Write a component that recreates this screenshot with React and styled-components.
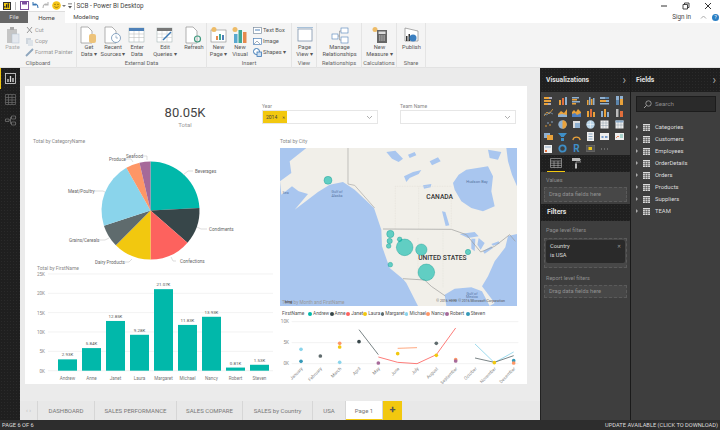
import styled, { createGlobalStyle } from "styled-components";

const GlobalStyle = createGlobalStyle`
  html, body { margin: 0; padding: 0; background: #fff; }
  body { width: 720px; height: 430px; overflow: hidden; font-family: Roboto, "Liberation Sans", sans-serif; }
  * { box-sizing: border-box; }
`;

const dots = `radial-gradient(rgba(255,255,255,.05) .5px, transparent .6px)`;

const Ico = ({ w = 18, h = 18, children }) => (
  <svg width={w} height={h} viewBox={`0 0 ${w} ${h}`} fill="none">{children}</svg>
);

const Doc = ({ x = 2, y = 1 }) => (
  <path d={`M${x} ${y}h7l4 4v12h-11z`} fill="#fff" stroke="#8f8f8f" strokeWidth=".7" />
);

const TableGlyph = ({ size = 7, color = "#ddd" }) => (
  <svg width={size} height={size} viewBox="0 0 7 7">
    <rect width="7" height="7" fill={color} />
    <path d="M2.3 1.5v5.5M4.7 1.5v5.5M0 1.5h7M0 3.4h7M0 5.3h7" stroke="#333" strokeWidth=".5" />
  </svg>
);

const icons = {
  paste: (
    <Ico>
      <rect x="3" y="3" width="10" height="14" fill="#c5c5c5" />
      <rect x="6" y="1" width="4" height="3" fill="#aaa" />
      <rect x="8" y="8" width="7" height="9" fill="#e4e8ee" stroke="#b4c2d2" strokeWidth=".5" />
    </Ico>
  ),
  getData: (
    <Ico>
      <Doc x={1} />
      <rect x="9" y="8" width="7" height="9" rx="2" fill="#edc37a" />
    </Ico>
  ),
  recent: (
    <Ico>
      <Doc x={1} />
      <circle cx="12" cy="12" r="4.5" fill="#fff" stroke="#6c8fb4" strokeWidth=".8" />
      <path d="M12 9.5V12h2" stroke="#6c8fb4" strokeWidth=".6" />
    </Ico>
  ),
  enter: (
    <Ico>
      <rect x="1" y="2" width="15" height="14" fill="#fff" stroke="#9aa" strokeWidth=".5" />
      <rect x="1" y="2" width="15" height="3" fill="#4f81b8" />
      <path d="M1 8h15M1 11.5h15M6 5v11M11 5v11" stroke="#b5b5b5" strokeWidth=".5" />
    </Ico>
  ),
  edit: (
    <Ico>
      <rect x="1" y="2" width="15" height="14" fill="#fff" stroke="#9aa" strokeWidth=".5" />
      <rect x="1" y="2" width="15" height="3" fill="#777" />
      <path d="M1 8h15M1 11.5h15M6 5v11M11 5v11" stroke="#c5c5c5" strokeWidth=".5" />
      <path d="M7 14 15 6" stroke="#3b78b5" strokeWidth="1.5" />
    </Ico>
  ),
  refresh: (
    <Ico>
      <Doc x={1} />
      <circle cx="12.5" cy="13" r="3" stroke="#3f9a7f" strokeWidth="1.2" />
    </Ico>
  ),
  newPage: (
    <Ico>
      <rect x="1" y="4" width="15" height="12" fill="#fff" stroke="#888" strokeWidth=".6" />
      <circle cx="4" cy="3.5" r="2.5" fill="#eebc68" />
      <rect x="6" y="10" width="2" height="4" fill="#e58a4e" />
      <rect x="9" y="8" width="2" height="6" fill="#3fa796" />
      <rect x="12" y="9" width="2" height="5" fill="#4f81b8" />
    </Ico>
  ),
  newVisual: (
    <Ico>
      <circle cx="4" cy="3.5" r="2.5" fill="#eebc68" />
      <rect x="3" y="8" width="3.5" height="9" fill="#58a8d0" />
      <rect x="7.5" y="4" width="3.5" height="13" fill="#3fa796" />
      <rect x="12" y="6" width="3.5" height="11" fill="#e58a4e" />
    </Ico>
  ),
  pageView: (
    <Ico>
      <rect x="2" y="3" width="14" height="12" fill="#fff" stroke="#7f95ad" strokeWidth=".8" />
      <path d="M1 1.5h16" stroke="#86aacd" strokeWidth=".7" />
    </Ico>
  ),
  manage: (
    <Ico>
      <rect x="1" y="8" width="6" height="5" fill="#fff" stroke="#4f81b8" strokeWidth=".6" />
      <rect x="10" y="2" width="7" height="5" fill="#fff" stroke="#4f81b8" strokeWidth=".6" />
      <rect x="10" y="11" width="7" height="6" fill="#fff" stroke="#4f81b8" strokeWidth=".6" />
      <path d="M7 10h1.5V5H10M8.5 10v4H10" stroke="#777" strokeWidth=".5" />
    </Ico>
  ),
  measure: (
    <Ico>
      <circle cx="4" cy="3.5" r="2.5" fill="#eebc68" />
      <rect x="6" y="4" width="10" height="13" fill="#666" />
      <rect x="7.5" y="5.5" width="7" height="2.5" fill="#ddd" />
      <path d="M8 10h6M8 12h6M8 14h6" stroke="#ddd" strokeWidth=".9" strokeDasharray="1.5 .7" />
    </Ico>
  ),
  publish: (
    <Ico>
      <path d="M2 2 15 5v10H2z" fill="#fff" stroke="#777" strokeWidth=".6" />
      <rect x="3" y="10" width="1.5" height="5" fill="#333" />
      <rect x="5.5" y="8" width="1.5" height="7" fill="#333" />
      <circle cx="10" cy="12" r="3.5" fill="#3b7fc0" />
    </Ico>
  ),
};

function Small({ children }) {
  return <svg width="9" height="9" viewBox="0 0 9 9" fill="none">{children}</svg>;
}

const tileIcons = [
  <><rect y="1" width="5" height="2" fill="#e9a23b" /><rect x="5" y="1" width="3" height="2" fill="#aab" /><rect y="4" width="7" height="2" fill="#e9a23b" /><rect y="7" width="4" height="2" fill="#e9a23b" /><rect x="4" y="7" width="3" height="2" fill="#aab" /></>,
  <><rect x="1" y="4" width="2" height="5" fill="#e9a23b" /><rect x="4" y="2" width="2" height="7" fill="#e36f3c" /><rect x="7" y="1" width="2" height="8" fill="#8fb0d0" /></>,
  <><rect y="1" width="7" height="1.5" fill="#8fb0d0" /><rect y="3" width="5" height="1.5" fill="#e9a23b" /><rect y="5" width="8" height="1.5" fill="#8fb0d0" /><rect y="7" width="4" height="1.5" fill="#e9a23b" /></>,
  <><rect x="1" y="4" width="1.5" height="5" fill="#e9a23b" /><rect x="3" y="1" width="1.5" height="8" fill="#8fb0d0" /><rect x="5" y="3" width="1.5" height="6" fill="#e9a23b" /><rect x="7" y="2" width="1.5" height="7" fill="#8fb0d0" /></>,
  <><rect y="1" width="5" height="2" fill="#8fb0d0" /><rect x="5" y="1" width="4" height="2" fill="#5c86ad" /><rect y="4" width="6" height="2" fill="#e9a23b" /><rect x="6" y="4" width="3" height="2" fill="#8fb0d0" /><rect y="7" width="9" height="1.5" fill="#8fb0d0" /></>,
  <><rect x="1" width="3" height="9" fill="#8fb0d0" /><rect x="1" y="4" width="3" height="5" fill="#5c86ad" /><rect x="5" width="3" height="9" fill="#8fb0d0" /><rect x="5" y="3" width="3" height="6" fill="#e9a23b" /></>,
  <><path d="M0 8 3 4l2 2 4-5" stroke="#e9a23b" strokeWidth=".8" /><path d="M0 6l3 1 2-3 4 2" stroke="#8fb0d0" strokeWidth=".6" /></>,
  <><path d="M0 9V6l3-3 3 2 3-4v8z" fill="#e9a23b" /><path d="M0 9V7l4-1 5 1v2z" fill="#8fb0d0" /></>,
  <><path d="M0 9V4l2-2 2 2 2-3 3 3v5z" fill="#e9a23b" /><path d="M0 9V6l3-1 2 2 4-2v4z" fill="#4f7fc0" /></>,
  <><rect x="1" y="3" width="2" height="6" fill="#e9a23b" /><rect x="4" y="1" width="2" height="8" fill="#e36f3c" /><rect x="7" y="4" width="2" height="5" fill="#e9a23b" /></>,
  <><rect x="1" y="3" width="2" height="6" fill="#8fb0d0" /><rect x="4" y="1" width="2" height="8" fill="#e9a23b" /><rect x="7" y="4" width="2" height="5" fill="#8fb0d0" /></>,
  <><rect x="1" y="1" width="2.5" height="8" fill="#bbb" /><rect x="5" y="3" width="3" height="6" fill="#e36f3c" /></>,
  <><circle cx="2" cy="6" r=".8" fill="#e9a23b" /><circle cx="4" cy="3" r=".8" fill="#8fb0d0" /><circle cx="6" cy="5" r=".8" fill="#e9a23b" /><circle cx="8" cy="2" r=".8" fill="#8fb0d0" /></>,
  <><circle cx="4.5" cy="4.5" r="4.2" fill="#8fb0d0" /><path d="M4.5 4.5V.3a4.2 4.2 0 0 1 0 8.4z" fill="#e9a23b" /></>,
  <><rect x="1" y="1" width="7" height="7" fill="#ddd" /><rect x="3" y="3" width="5" height="5" fill="#8fb0d0" /></>,
  <><circle cx="4.5" cy="4.5" r="4.2" fill="#bcd6e8" /><path d="M1 4.5h7M4.5 1v7" stroke="#fff" strokeWidth=".5" /></>,
  <><rect x=".5" y=".5" width="8" height="8" fill="#eee" /><path d="M.5 3h8M.5 5.5h8M3 .5v8M6 .5v8" stroke="#789" strokeWidth=".4" /></>,
  <><rect x=".5" y=".5" width="8" height="8" fill="#eee" /><rect x=".5" y=".5" width="8" height="2" fill="#8fb0d0" /><path d="M.5 5h8M3 .5v8M6 .5v8" stroke="#789" strokeWidth=".4" /></>,
  <><rect y="1" width="6" height="5" fill="#8fb0d0" /><rect x="3" y="3" width="6" height="5" fill="#e9a23b" /></>,
  <><path d="M0 1h9L6 4.5V5H3v-.5z" fill="#3f8fc7" /><rect x="3" y="6" width="3" height="3" fill="#3f8fc7" /></>,
  <><path d="M.8 8a3.8 3.8 0 0 1 7.4 0" stroke="#e9a23b" strokeWidth="1.3" /></>,
  <><rect x="1" y="0" width="7" height="9" fill="#eee" /><path d="M2.5 2h4M2.5 4.5h4M2.5 7h4" stroke="#5c86ad" strokeWidth=".7" /></>,
  <><rect y="1" width="9" height="7" fill="#eee" /><path d="M1.5 5h2M5 5h2.5" stroke="#4f7fc0" strokeWidth="1.5" /></>,
  <><rect y="1" width="9" height="7" fill="#eee" /><path d="M1 6l2-2 1 1" stroke="#e36f3c" strokeWidth=".8" /><path d="M5 3h3M5 5h3" stroke="#3fa796" strokeWidth=".8" /></>,
  <><rect y="1" width="8" height="8" fill="#eee" /><path d="M1 6h2v2H1z" fill="#e36f3c" /><path d="M1 3h6" stroke="#8fb0d0" /></>,
  <><circle cx="4.5" cy="4.5" r="3.2" stroke="#3f8fc7" strokeWidth="1.8" /></>,
  null,
  <><rect x="0" y="1.5" width="9" height="6" fill="#555" stroke="#888" strokeWidth=".4" /><rect x="2.5" y="3" width="3.5" height="3" fill="#e9c21b" /></>,
  <><path d="M1 5h.9M4 5h.9M7 5h.9" stroke="#bbb" strokeWidth=".8" /></>,
];

const tabs = ["DASHBOARD", "SALES PERFORMANCE", "SALES COMPARE", "SALES by Country", "USA"];
const tabWidths = [57, 82, 66, 70, 33];
const fields = ["Categories", "Customers", "Employees", "OrderDetails", "Orders", "Products", "Suppliers", "TEAM"];

const pieCx = 150.5;
const pieCy = 210.5;
const pieR = 49;
const slices = [
  ["#01b8aa", 0, 87],
  ["#374649", 87, 131],
  ["#fd625e", 131, 180],
  ["#f2c80f", 180, 225],
  ["#5f6b6d", 225, 252],
  ["#8ad4eb", 252, 330.5],
  ["#fe9666", 330.5, 347],
  ["#a66999", 347, 360],
];
const pieLabels = [
  ["Seafood", 126, 158, "M143 156h4v4"],
  ["Produce", 109, 161, "M126 159h5l2 3"],
  ["Meat/Poultry", 68, 193, "M95 191h8l2 1"],
  ["Grains/Cereals", 69, 242, "M99 240h6l4-2"],
  ["Dairy Products", 95, 264, "M125 262h4l3-3"],
  ["Confections", 180, 263, "M176 261h-3l-2-4"],
  ["Condiments", 209, 231, "M207 229h-6l-4-2"],
  ["Beverages", 195, 173, "M193 171h-5l-5 4"],
];

function arc(start, end) {
  const p = (deg) => {
    const a = ((deg - 90) * Math.PI) / 180;
    return `${(pieCx + pieR * Math.cos(a)).toFixed(2)} ${(pieCy + pieR * Math.sin(a)).toFixed(2)}`;
  };
  return `M${pieCx} ${pieCy}L${p(start)}A${pieR} ${pieR} 0 ${end - start > 180 ? 1 : 0} 1 ${p(end)}Z`;
}

const bars = [
  ["Andrew", 2.93, "2.93K"],
  ["Anne", 5.84, "5.84K"],
  ["Janet", 12.85, "12.85K"],
  ["Laura", 9.28, "9.28K"],
  ["Margaret", 21.07, "21.07K"],
  ["Michael", 11.83, "11.83K"],
  ["Nancy", 13.93, "13.93K"],
  ["Robert", 0.81, "0.81K"],
  ["Steven", 1.53, "1.53K"],
];
const barBase = 370.7;
const perK = 3.87;

const legend = [
  ["Andrew", "#01b8aa", 21.6],
  ["Anne", "#374649", 16.7],
  ["Janet", "#fd625e", 17],
  ["Laura", "#f2c80f", 17.3],
  ["Margaret", "#5f6b6d", 24],
  ["Michael", "#8ad4eb", 21.7],
  ["Nancy", "#fe9666", 18.7],
  ["Robert", "#a66999", 20.7],
  ["Steven", "#3599b8", 20],
];
const months = ["January", "February", "March", "April", "May", "June", "July", "August", "September", "October", "November", "December"];
const points = [
  [78, 134, "#8ad4eb"], [78, 170, "#3599b8"], [136, 154, "#5f6b6d"], [194, 116, "#fe9666"], [194, 127, "#f2c80f"],
  [194, 173, "#8ad4eb"], [252, 111, "#374649"], [310, 175, "#a66999"], [368, 147, "#f2c80f"], [484, 116, "#5f6b6d"],
  [484, 152, "#f2c80f"], [542, 165, "#fe9666"], [542, 169, "#a66999"], [658, 174, "#f2c80f"], [716, 168, "#3599b8"], [716, 175, "#fe9666"],
];
const lines = [
  ["#5f6b6d", "252,75 310,150"],
  ["#fd625e", "310,157 368,173 426,177 484,150 542,70"],
  ["#fe9666", "368,131 426,129"],
  ["#8ad4eb", "600,118 658,174 716,142"],
  ["#5f6b6d", "600,160 658,173 716,153"],
];
const bubbles = [
  [160, 257, 12], [347, 418, 11], [345, 439, 8], [342, 454, 7], [375, 434, 7],
  [390, 458, 25], [440, 465, 17], [455, 533, 25], [347, 510, 7], [580, 472, 8],
];

function Pie() {
  return (
    <ChartSvg width="255" height="116" viewBox="25 148 255 116">
      {slices.map(([c, a, b]) => <path key={c} d={arc(a, b)} fill={c} />)}
      {pieLabels.map(([t, x, y, d]) => (
        <g key={t}>
          <path d={d} stroke="#bbb" strokeWidth=".5" fill="none" />
          <text x={x} y={y} fontSize="4.6" fill="#666">{t}</text>
        </g>
      ))}
    </ChartSvg>
  );
}

function BarChart() {
  return (
    <ChartSvg width="255" height="112" viewBox="25 272 255 112">
      {[0, 5, 10, 15, 20, 25].map((k) => (
        <g key={k}>
          <path d={`M48 ${barBase - k * perK}H273`} stroke="#eaeaea" strokeWidth=".6" />
          <text x="45" y={barBase - k * perK + 2} fontSize="4.6" fill="#888" textAnchor="end">{k}K</text>
        </g>
      ))}
      {bars.map(([name, v, label], i) => {
        const x = 58 + i * 24;
        const h = v * perK;
        return (
          <g key={name}>
            <rect x={x} y={barBase - h} width="19" height={h} fill="#01b8aa" />
            <text x={x + 9.5} y={barBase - h - 3} fontSize="4.4" fill="#555" textAnchor="middle">{label}</text>
            <text x={x + 9.5} y="380" fontSize="4.6" fill="#777" textAnchor="middle">{name}</text>
          </g>
        );
      })}
    </ChartSvg>
  );
}

function MapChart() {
  const water = "#a9c6ef";
  return (
    <ChartSvg width="237" height="158" viewBox="16 160 711 474">
      <rect x="16" y="160" width="711" height="474" fill={water} />
      <path
        d="M95 160H727V418L700 424 692 458 660 500 640 545 622 575 660 625 645 634 622 590 590 578 540 582 510 600 515 634H430L395 565 385 553 345 520 322 455 320 405 298 340 240 285 205 262 165 270 130 292 60 345 100 298 72 290 52 275 20 300 16 260 50 235 45 200Z"
        fill="#f1efe9"
      />
      <path d="M575 225 640 215 655 245 650 290 660 335 625 350 590 340 560 320 540 285 535 265 552 240Z" fill={water} />
      <path d="M695 160H727V275L712 240 700 200ZM640 165 680 172 670 195 645 190Z" fill={water} />
      <path d="M335 172 362 168 385 192 372 202 352 192ZM388 245 415 232 440 226 432 238 405 250 395 262ZM445 272 470 268 468 278 448 282ZM502 350 512 352 524 392 513 394ZM465 200 490 188 498 200 472 212ZM400 180 420 172 425 182 405 190Z" fill={water} />
      <path d="M555 418 600 412 612 425 580 430ZM590 432 602 432 600 470 590 462ZM612 430 630 445 618 465 608 450ZM625 470 650 455 655 460 630 477ZM650 448 672 440 675 447 655 453Z" fill={water} />
      <path d="M362 275V402M432 275V402M362 275H530M530 310V400M430 430V555M505 410V580" stroke="#dedbd4" strokeWidth="1.2" strokeDasharray="3 2" fill="none" />
      <path d="M220 160V268L240 272 300 340" stroke="#a9a8a4" strokeWidth="2" fill="none" />
      <path d="M325 403 530 404 575 420 618 472 660 455 705 420 722 440" stroke="#9a9a98" strokeWidth="2" fill="none" />
      <path d="M385 552 450 556 470 575 512 604" stroke="#9a9a98" strokeWidth="2" fill="none" />
      {bubbles.map(([x, y, r]) => (
        <circle key={`${x}-${y}`} cx={x} cy={y} r={r} fill="#01b8aa" fillOpacity=".6" stroke="#018f85" strokeWidth="1" />
      ))}
      <text x="495" y="312" fontSize="20" fill="#333" textAnchor="middle" fontWeight="500">CANADA</text>
      <text x="503" y="497" fontSize="20" fill="#333" textAnchor="middle" fontWeight="500">UNITED STATES</text>
      <text x="607" y="264" fontSize="12" fill="#55749f" textAnchor="middle">Hudson Bay</text>
      <text x="187" y="296" fontSize="11" fill="#55749f" textAnchor="middle">Gulf of</text>
      <text x="187" y="308" fontSize="11" fill="#55749f" textAnchor="middle">Alaska</text>
      <text x="33" y="299" fontSize="11" fill="#55749f" textAnchor="middle">Sea</text>
      <text x="592" y="600" fontSize="11" fill="#55749f" textAnchor="middle">Gulf of</text>
      <text x="592" y="611" fontSize="11" fill="#55749f" textAnchor="middle">Mexico</text>
      <text x="22" y="629" fontSize="14" fill="#999">Total by Month and FirstName</text>
      <text x="30" y="624" fontSize="12" fill="#333">bing</text>
      <text x="485" y="623" fontSize="10.5" fill="#555">© 2016 HERE   © 2016 Microsoft Corporation</text>
    </ChartSvg>
  );
}

function LineChart() {
  return (
    <ChartSvg width="245" height="66" viewBox="15 40 735 198">
      {[[51, "10K"], [114, "5K"], [177, "0K"]].map(([y, t]) => (
        <g key={t}>
          <path d={`M50 ${y}H730`} stroke="#e4e4e4" strokeWidth="1.5" />
          <text x="42" y={y + 5} fontSize="14" fill="#888" textAnchor="end">{t}</text>
        </g>
      ))}
      {lines.map(([c, p]) => <polyline key={p} points={p} fill="none" stroke={c} strokeWidth="2.5" />)}
      {points.map(([x, y, c]) => <circle key={`${x}-${y}`} cx={x} cy={y} r="5.5" fill={c} />)}
      {months.map((m, i) => (
        <text key={m} x={84 + i * 58} y="193" fontSize="13.5" fill="#888" textAnchor="end" transform={`rotate(-45 ${84 + i * 58} 193)`}>{m}</text>
      ))}
    </ChartSvg>
  );
}

export default function App() {
  return (
    <>
      <GlobalStyle />
      <Window>
        <TitleBar>
          <AppLogo><svg width="7" height="7" viewBox="0 0 7 7"><path d="M1 6V4M3 6V2M5 6V1" stroke="#222" strokeWidth="1.3" /></svg></AppLogo>
          <TitleSep />
          <QuickIcons>
            <svg width="9" height="9" viewBox="0 0 9 9"><rect x=".5" y=".5" width="8" height="8" fill="#fff" stroke="#7a4f9e" /><rect x="2" y=".5" width="5" height="3" fill="#7a4f9e" /></svg>
            <svg width="9" height="9" viewBox="0 0 9 9" fill="none"><path d="M2 1v3h3M2 4c2-2 5-1 5 3" stroke="#3b78b5" strokeWidth="1.1" /></svg>
            <svg width="9" height="9" viewBox="0 0 9 9" fill="none"><path d="M7 1v3H4M7 4C5 2 2 3 2 7" stroke="#b5b5b5" strokeWidth="1.1" /></svg>
            <svg width="9" height="9" viewBox="0 0 9 9"><circle cx="4.5" cy="4.5" r="4.3" fill="#f5c518" /><path d="M2.5 5.5c1 1.2 3 1.2 4 0" stroke="#6b4e00" strokeWidth=".6" fill="none" /><circle cx="3" cy="3.3" r=".6" fill="#6b4e00" /><circle cx="6" cy="3.3" r=".6" fill="#6b4e00" /></svg>
            <svg width="4" height="9" viewBox="0 0 4 9"><path d="M0 4h4L2 6z" fill="#777" /></svg>
            <svg width="4" height="9" viewBox="0 0 4 9"><path d="M0 2.5h4v.7H0zM0 5h4L2 7.500z" fill="#555" /></svg>
          </QuickIcons>
          <TitleSep $tight />
          <TitleText>SCB - Power BI Desktop</TitleText>
          <WindowControls>
            <svg width="8" height="8" viewBox="0 0 8 8"><path d="M1 4h6" stroke="#333" /></svg>
            <svg width="8" height="8" viewBox="0 0 8 8" fill="none"><path d="M1 2.5h4.5V7H1zM2.5 2.5V1H7v4.5H5.5" stroke="#333" strokeWidth=".9" /></svg>
            <svg width="8" height="8" viewBox="0 0 8 8"><path d="M1 1l6 6M7 1 1 7" stroke="#333" /></svg>
          </WindowControls>
        </TitleBar>
        <TabBar>
          <FileTab>File</FileTab>
          <RibbonTab $active>Home</RibbonTab>
          <RibbonTab>Modeling</RibbonTab>
          <SignIn>Sign in</SignIn>
          <svg width="7" height="7" viewBox="0 0 7 7" fill="none"><path d="M1 4.5 3.5 2 6 4.5" stroke="#aaa" /></svg>
          <HelpDot>?</HelpDot>
        </TabBar>
        <Ribbon>
          <Group $w={77} label="Clipboard">
            <BigButton $w={25} $dim icon={icons.paste} lines={["Paste"]} />
            <SmallList $left={0}>
              <SmallItem $dim><Small><path d="M2 1l5 6M7 1 2 7" stroke="#9a9a9a" /></Small>Cut</SmallItem>
              <SmallItem $dim><Small><rect x="1" y="1" width="5" height="6" fill="#cfd6dd" /><rect x="3" y="3" width="5" height="6" fill="#dde3e9" /></Small>Copy</SmallItem>
              <SmallItem $dim><Small><path d="M1 8 5 4l3-3" stroke="#8ea6bd" strokeWidth="1.8" /></Small>Format Painter</SmallItem>
            </SmallList>
          </Group>
          <Group $w={130} label="External Data">
            <BigButton $w={24} icon={icons.getData} lines={["Get", "Data ▾"]} />
            <BigButton $w={24} icon={icons.recent} lines={["Recent", "Sources ▾"]} />
            <BigButton $w={24} icon={icons.enter} lines={["Enter", "Data"]} />
            <BigButton $w={32} icon={icons.edit} lines={["Edit", "Queries ▾"]} />
            <BigButton $w={26} icon={icons.refresh} lines={["Refresh"]} />
          </Group>
          <Group $w={85} label="Insert">
            <BigButton $w={23} icon={icons.newPage} lines={["New", "Page ▾"]} />
            <BigButton $w={20} icon={icons.newVisual} lines={["New", "Visual"]} />
            <SmallList $left={3}>
              <SmallItem><Small><rect x=".5" y="1.5" width="8" height="6" fill="#fff" stroke="#7d8ea0" strokeWidth=".7" /><path d="M2 4h5" stroke="#4f81b8" /></Small>Text Box</SmallItem>
              <SmallItem><Small><rect x=".5" y="1.5" width="8" height="6" fill="#fff" stroke="#4f81b8" strokeWidth=".7" /><path d="M1 7l3-3 3 3" stroke="#7d8ea0" strokeWidth=".7" fill="none" /></Small>Image</SmallItem>
              <SmallItem><Small><circle cx="3.5" cy="3.5" r="3" fill="#fff" stroke="#3b78b5" /><rect x="4" y="4" width="4.5" height="4.5" fill="#cfe0f2" stroke="#3b78b5" strokeWidth=".8" /></Small>Shapes ▾</SmallItem>
            </SmallList>
          </Group>
          <Group $w={25} label="View">
            <BigButton $w={25} icon={icons.pageView} lines={["Page", "View ▾"]} />
          </Group>
          <Group $w={45} label="Relationships">
            <BigButton $w={45} icon={icons.manage} lines={["Manage", "Relationships"]} />
          </Group>
          <Group $w={35} label="Calculations">
            <BigButton $w={35} icon={icons.measure} lines={["New", "Measure ▾"]} />
          </Group>
          <Group $w={29} label="Share">
            <BigButton $w={29} icon={icons.publish} lines={["Publish"]} />
          </Group>
        </Ribbon>
        <Main>
          <Rail>
            <RailItem $active>
              <svg width="11" height="11" viewBox="0 0 11 11" fill="none"><rect x=".5" y=".5" width="10" height="10" stroke="#ddd" strokeWidth=".8" /><path d="M3 9V6M5.5 9V3M8 9V5" stroke="#ddd" strokeWidth="1.3" /></svg>
            </RailItem>
            <RailItem>
              <svg width="11" height="11" viewBox="0 0 11 11" fill="none"><path d="M.5.5h10v10H.5zM.5 3.5h10M.5 6h10M.5 8.5h10M3.5.5v10M7 .5v10" stroke="#6d6d6d" strokeWidth=".7" /></svg>
            </RailItem>
            <RailItem>
              <svg width="11" height="11" viewBox="0 0 11 11" fill="none"><path d="M.5 4H4v2.5H.5zM6.5 1h4v3h-4zM6.5 7h4v3h-4zM4 5h1.5V2.500h1M5.500 5v3.500h1" stroke="#7a7a7a" strokeWidth=".7" /></svg>
            </RailItem>
          </Rail>
          <Canvas>
            <Stage>
              <Page>
                <Column>
                  <Kpi>
                    <KpiValue>80.05K</KpiValue>
                    <KpiLabel>Total</KpiLabel>
                  </Kpi>
                  <VisualTitle $left={8} $h={11}>Total by CategoryName</VisualTitle>
                  <Pie />
                  <VisualTitle $left={12} $h={8}>Total by FirstName</VisualTitle>
                  <BarChart />
                </Column>
                <Column>
                  <SlicerRow>
                    <Slicer>
                      <SlicerLabel>Year</SlicerLabel>
                      <SlicerBox>
                        <Chip>2014 <span>✕</span></Chip>
                        <Chevron />
                      </SlicerBox>
                    </Slicer>
                    <Slicer>
                      <SlicerLabel>Team Name</SlicerLabel>
                      <SlicerBox>
                        <Chevron />
                      </SlicerBox>
                    </Slicer>
                  </SlicerRow>
                  <VisualTitle $left={0} $h={11}>Total by City</VisualTitle>
                  <MapChart />
                  <Legend>
                    <LegendTitle>FirstName</LegendTitle>
                    {legend.map(([n, c, w]) => (
                      <LegendItem key={n} $w={w}><LegendDot $color={c} />{n}</LegendItem>
                    ))}
                  </Legend>
                  <LineChart />
                </Column>
              </Page>
            </Stage>
            <PageTabs>
              <TabArrows>‹ ›</TabArrows>
              {tabs.map((t, i) => <PageTab key={t} $w={tabWidths[i]}>{t}</PageTab>)}
              <PageTab $w={37} $active>Page 1</PageTab>
              <AddTab>+</AddTab>
            </PageTabs>
          </Canvas>
          <VizPane>
            <PaneHeader>Visualizations<PaneChevron>›</PaneChevron></PaneHeader>
            <TileGrid>
              {tileIcons.map((t, i) => (
                <Tile key={i}>
                  {i === 26 ? <RTile>R</RTile> : <svg width="9" height="9" viewBox="0 0 9 9" fill="none">{t}</svg>}
                </Tile>
              ))}
            </TileGrid>
            <BuildTabs>
              <BuildTab $active>
                <svg width="12" height="10" viewBox="0 0 12 10" fill="none"><path d="M.5.5h11v9H.5zM.5 3h11M.5 5.2h11M.5 7.4h11M4 3v6.5M8 3v6.5" stroke="#bbb" strokeWidth=".6" /></svg>
              </BuildTab>
              <BuildTab>
                <svg width="10" height="11" viewBox="0 0 10 11"><rect x="1" y="0" width="8" height="3" fill="#bbb" /><path d="M9 1.5h1V4H5v1.5" stroke="#bbb" strokeWidth=".6" fill="none" /><rect x="4" y="5.5" width="2" height="5" fill="#bbb" /></svg>
              </BuildTab>
            </BuildTabs>
            <WellLabel>Values</WellLabel>
            <DropWell $h={15}>Drag data fields here</DropWell>
            <FiltersHeader>Filters</FiltersHeader>
            <WellLabel $gap={5}>Page level filters</WellLabel>
            <FilterWell>
              <FilterCard>
                <div>Country<br />is USA</div>
                <CardClose>✕</CardClose>
              </FilterCard>
            </FilterWell>
            <WellLabel $gap={6}>Report level filters</WellLabel>
            <DropWell $h={13}>Drag data fields here</DropWell>
          </VizPane>
          <FieldsPane>
            <PaneHeader>Fields<PaneChevron>›</PaneChevron></PaneHeader>
            <SearchBox>
              <svg width="9" height="9" viewBox="0 0 9 9" fill="none"><circle cx="5.5" cy="3.5" r="2.7" stroke="#aaa" strokeWidth=".8" /><path d="M3.5 5.5 1 8" stroke="#aaa" strokeWidth=".9" /></svg>
              Search
            </SearchBox>
            <FieldList>
              {fields.map((f) => (
                <FieldRow key={f}>
                  <FieldCaret />
                  <TableGlyph />
                  {f}
                </FieldRow>
              ))}
            </FieldList>
          </FieldsPane>
        </Main>
        <StatusBar>
          <span>PAGE 6 OF 6</span>
          <span>UPDATE AVAILABLE (CLICK TO DOWNLOAD)</span>
        </StatusBar>
      </Window>
    </>
  );
}

function Group({ $w, label, children }) {
  return (
    <GroupBox $w={$w}>
      <GroupBody>{children}</GroupBody>
      <GroupLabel>{label}</GroupLabel>
    </GroupBox>
  );
}

function BigButton({ $w, $dim, icon, lines: labelLines }) {
  return (
    <BigBtn $w={$w} $dim={$dim}>
      <BigIcon>{icon}</BigIcon>
      {labelLines.map((l) => <span key={l}>{l}</span>)}
    </BigBtn>
  );
}

function Chevron() {
  return (
    <ChevronWrap>
      <svg width="7" height="5" viewBox="0 0 7 5" fill="none"><path d="M1 1l2.5 2.500L6 1" stroke="#999" strokeWidth=".8" /></svg>
    </ChevronWrap>
  );
}

const Window = styled.div`
  width: 720px;
  height: 430px;
  display: flex;
  flex-direction: column;
  overflow: hidden;
`;

const TitleBar = styled.div`
  height: 11px;
  display: flex;
  align-items: center;
  padding-left: 3px;
  background: #fff;
`;

const AppLogo = styled.div`
  width: 8px;
  height: 8px;
  background: #f2c80f;
  border: 1px solid #333;
  display: flex;
  align-items: center;
  justify-content: center;
  overflow: hidden;
`;

const TitleSep = styled.div`
  width: 1px;
  height: 8px;
  background: #bbb;
  margin: 0 ${(p) => (p.$tight ? 2 : 4)}px;
`;

const QuickIcons = styled.div`
  display: flex;
  align-items: center;
  gap: 1.5px;
`;

const TitleText = styled.div`
  font-size: 6.4px;
  color: #444;
`;

const WindowControls = styled.div`
  margin-left: auto;
  display: flex;
  gap: 14px;
  padding-right: 8px;
`;

const TabBar = styled.div`
  height: 12px;
  display: flex;
  align-items: center;
  background: #fff;
`;

const FileTab = styled.div`
  width: 28px;
  height: 12px;
  background: #666;
  color: #ddd;
  font-size: 6.2px;
  line-height: 12px;
  text-align: center;
`;

const RibbonTab = styled.div`
  height: 12px;
  width: ${(p) => (p.$active ? 37 : 42)}px;
  background: ${(p) => (p.$active ? "#f4f4f4" : "#fff")};
  border-top: ${(p) => (p.$active ? "1px solid #ddd" : "0")};
  color: #444;
  font-size: 6.2px;
  line-height: 12px;
  text-align: center;
`;

const SignIn = styled.div`
  margin-left: auto;
  margin-right: 9px;
  font-size: 6.3px;
  color: #444;
`;

const HelpDot = styled.div`
  width: 7px;
  height: 7px;
  margin: 0 1px 0 5px;
  border-radius: 50%;
  background: #2a7fc4;
  color: #fff;
  font-size: 5.5px;
  line-height: 7px;
  text-align: center;
`;

const Ribbon = styled.div`
  height: 45px;
  display: flex;
  background: #f4f4f4;
  box-shadow: inset 0 -1px #e2e2e2;
`;

const GroupBox = styled.div`
  width: ${(p) => p.$w}px;
  height: 45px;
  flex: none;
  display: flex;
  flex-direction: column;
  border-right: 1px solid #e4e4e4;
`;

const GroupBody = styled.div`
  flex: 1;
  display: flex;
  min-height: 0;
`;

const GroupLabel = styled.div`
  height: 9px;
  font-size: 5.7px;
  line-height: 8px;
  text-align: center;
  color: #666;
  white-space: nowrap;
`;

const BigBtn = styled.div`
  width: ${(p) => p.$w}px;
  flex: none;
  display: flex;
  flex-direction: column;
  align-items: center;
  padding-top: 3px;
  font-size: 5.7px;
  line-height: 6.5px;
  white-space: nowrap;
  color: ${(p) => (p.$dim ? "#aaa" : "#555")};
`;

const BigIcon = styled.div`
  height: 18px;
`;

const SmallList = styled.div`
  display: flex;
  flex-direction: column;
  gap: 2px;
  padding: 2.5px 0 0 ${(p) => p.$left}px;
`;

const SmallItem = styled.div`
  display: flex;
  align-items: center;
  gap: 1px;
  height: 9px;
  font-size: 5.7px;
  white-space: nowrap;
  color: ${(p) => (p.$dim ? "#999" : "#555")};
`;

const Main = styled.div`
  flex: 1;
  display: flex;
  min-height: 0;
`;

const Rail = styled.div`
  width: 20px;
  flex: none;
  display: flex;
  flex-direction: column;
  background: #1f1f1f;
  background-image: ${dots};
  background-size: 3px 3px;
`;

const RailItem = styled.div`
  height: 21px;
  display: flex;
  align-items: center;
  justify-content: center;
  border-left: 1px solid ${(p) => (p.$active ? "#f2c80f" : "transparent")};
`;

const Canvas = styled.div`
  width: 520px;
  flex: none;
  display: flex;
  flex-direction: column;
  background: #ebebeb;
`;

const Stage = styled.div`
  flex: 1;
  min-height: 0;
  padding: 18px 13px 0 5px;
`;

const Page = styled.div`
  width: 502px;
  height: 298px;
  display: grid;
  grid-template-columns: 255px 247px;
  background: #fff;
`;

const Column = styled.div`
  display: flex;
  flex-direction: column;
  min-width: 0;
`;

const Kpi = styled.div`
  width: 320px;
  height: 51px;
  padding-top: 18px;
  text-align: center;
`;

const KpiValue = styled.div`
  font-size: 13px;
  line-height: 17px;
  color: #444;
`;

const KpiLabel = styled.div`
  font-size: 6px;
  line-height: 8px;
  color: #999;
`;

const VisualTitle = styled.div`
  height: ${(p) => p.$h}px;
  padding-left: ${(p) => p.$left}px;
  font-size: 5px;
  line-height: 9px;
  color: #888;
  white-space: nowrap;
`;

const ChartSvg = styled.svg`
  display: block;
  flex: none;
  overflow: visible;
`;

const SlicerRow = styled.div`
  height: 51px;
  display: grid;
  grid-template-columns: 116px 116px;
  column-gap: 22px;
  margin-left: -18px;
  padding-top: 16px;
`;

const Slicer = styled.div`
  display: flex;
  flex-direction: column;
`;

const SlicerLabel = styled.div`
  height: 8px;
  font-size: 5px;
  line-height: 8px;
  color: #888;
`;

const SlicerBox = styled.div`
  height: 14px;
  display: flex;
  align-items: center;
  border: 1px solid #e6e6e6;
`;

const Chip = styled.div`
  height: 12px;
  width: 24px;
  display: flex;
  align-items: center;
  justify-content: space-between;
  padding: 0 2px 0 3px;
  background: #f2c80f;
  color: #444;
  font-size: 5px;

  span {
    font-size: 4px;
  }
`;

const ChevronWrap = styled.div`
  margin-left: auto;
  padding-right: 4px;
  display: flex;
`;

const Legend = styled.div`
  height: 12px;
  display: flex;
  align-items: center;
  padding: 3px 0 0 2px;
  font-size: 4.8px;
  color: #555;
  white-space: nowrap;
`;

const LegendTitle = styled.span`
  width: 26px;
  flex: none;
`;

const LegendItem = styled.span`
  width: ${(p) => p.$w}px;
  flex: none;
  display: flex;
  align-items: center;
  gap: 1px;
`;

const LegendDot = styled.i`
  width: 4px;
  height: 4px;
  border-radius: 50%;
  background: ${(p) => p.$color};
`;

const PageTabs = styled.div`
  height: 19px;
  display: flex;
  background: #e8e8e8;
  font-size: 6px;
  color: #777;
`;

const TabArrows = styled.div`
  width: 18px;
  flex: none;
  border-right: 1px solid #d6d6d6;
  line-height: 18px;
  text-align: center;
  color: #bbb;
`;

const PageTab = styled.div`
  width: ${(p) => p.$w}px;
  flex: none;
  line-height: 19px;
  text-align: center;
  white-space: nowrap;
  border-right: 1px solid #d6d6d6;
  background: ${(p) => (p.$active ? "#fff" : "transparent")};
  border-bottom: ${(p) => (p.$active ? "1px solid #f2c80f" : "0")};
`;

const AddTab = styled.div`
  width: 19px;
  flex: none;
  background: #f2c80f;
  color: #555;
  font-size: 11px;
  font-weight: 700;
  line-height: 18px;
  text-align: center;
`;

const VizPane = styled.div`
  width: 91px;
  flex: none;
  border-left: 1px solid #222;
  border-right: 1px solid #1a1a1a;
  background: #3e3e3e;
  color: #ddd;
  display: flex;
  flex-direction: column;
`;

const FieldsPane = styled.div`
  width: 89px;
  flex: none;
  background: #3e3e3e;
  color: #ddd;
  display: flex;
  flex-direction: column;
`;

const PaneHeader = styled.div`
  height: 24px;
  flex: none;
  display: flex;
  align-items: center;
  justify-content: space-between;
  padding: 0 4px 0 5px;
  background: #1f1f1f;
  background-image: ${dots};
  background-size: 3px 3px;
  font-size: 6.8px;
  font-weight: 700;
  color: #e2e2e2;
`;

const PaneChevron = styled.span`
  font-size: 12px;
  font-weight: 400;
  line-height: 12px;
  color: #aaa;
`;

const TileGrid = styled.div`
  height: 63px;
  padding-top: 2px;
  display: grid;
  grid-template-columns: repeat(6, 14.2px);
  grid-auto-rows: 12px;
  align-content: start;
  justify-items: center;
  align-items: center;
`;

const Tile = styled.div`
  display: flex;
`;

const RTile = styled.span`
  font-size: 10px;
  font-weight: 700;
  line-height: 9px;
  color: #3f8fc7;
`;

const BuildTabs = styled.div`
  height: 17px;
  flex: none;
  display: flex;
  gap: 2px;
  padding-left: 6px;
  background: #1f1f1f;
  background-image: ${dots};
  background-size: 3px 3px;
`;

const BuildTab = styled.div`
  width: 18px;
  display: flex;
  align-items: center;
  justify-content: center;
  border-bottom: 1px solid ${(p) => (p.$active ? "#f2c80f" : "transparent")};
`;

const WellLabel = styled.div`
  margin: ${(p) => p.$gap ?? 4}px 0 0 5px;
  height: 8px;
  font-size: 5.5px;
  line-height: 8px;
  color: #8f8f8f;
`;

const DropWell = styled.div`
  height: ${(p) => p.$h}px;
  flex: none;
  margin: 3px 3px 0;
  border: 1px dashed #5a5a5a;
  background: #474747;
  padding-left: 4px;
  font-size: 5.7px;
  line-height: ${(p) => p.$h - 2}px;
  color: #929292;
`;

const FiltersHeader = styled.div`
  height: 17px;
  flex: none;
  margin-top: 2px;
  padding-left: 6px;
  background: #1f1f1f;
  background-image: ${dots};
  background-size: 3px 3px;
  font-size: 6.8px;
  font-weight: 700;
  line-height: 17px;
  color: #e2e2e2;
`;

const FilterWell = styled.div`
  height: 30px;
  flex: none;
  margin: 4px 3px 0;
  padding: 1px;
  border: 1px dashed #5a5a5a;
  background: #474747;
`;

const FilterCard = styled.div`
  height: 23px;
  padding: 2px 4px;
  display: flex;
  justify-content: space-between;
  background: #2a2a2a;
  border-radius: 2px;
  font-size: 5.7px;
  line-height: 9px;
  color: #ddd;
`;

const CardClose = styled.span`
  font-size: 5px;
  color: #999;
`;

const SearchBox = styled.div`
  height: 16px;
  margin: 4px 4px 0 5px;
  padding-left: 6px;
  display: flex;
  align-items: center;
  gap: 3px;
  background: #2a2a2a;
  border: 1px solid #1c1c1c;
  font-size: 6.2px;
  color: #8c8c8c;
`;

const FieldList = styled.div`
  padding-top: 9px;
  display: flex;
  flex-direction: column;
`;

const FieldRow = styled.div`
  height: 12px;
  display: flex;
  align-items: center;
  padding-left: 5px;
  font-size: 5.9px;
  color: #ddd;

  svg {
    margin-right: 5px;
  }
`;

const FieldCaret = styled.i`
  width: 0;
  height: 0;
  margin-right: 5px;
  border-left: 2.5px solid #aaa;
  border-top: 2px solid transparent;
  border-bottom: 2px solid transparent;
`;

const StatusBar = styled.div`
  height: 10px;
  flex: none;
  display: flex;
  justify-content: space-between;
  align-items: center;
  padding: 0 2px;
  background: #2d2d2d;
  color: #ddd;
  font-size: 5.7px;
`;
